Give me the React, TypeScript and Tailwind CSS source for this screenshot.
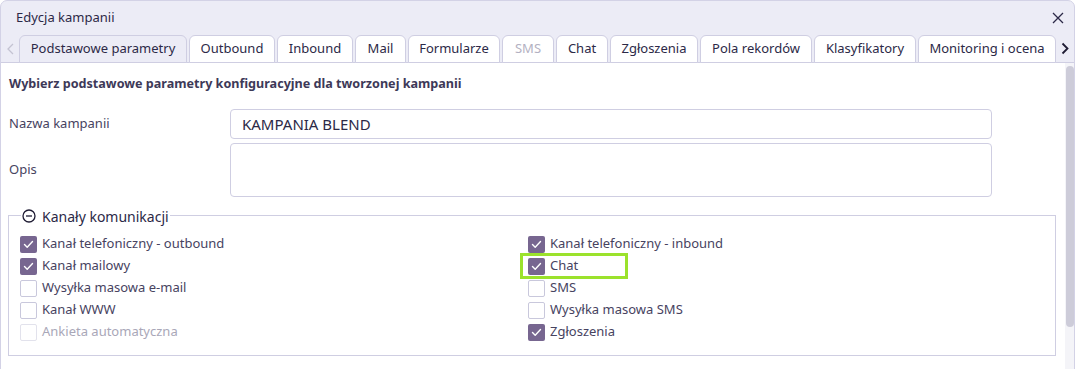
import React from "react";

const tabs: { label: string; w: number; active?: boolean; disabled?: boolean }[] = [
  { label: "Podstawowe parametry", w: 168, active: true },
  { label: "Outbound", w: 86 },
  { label: "Inbound", w: 76 },
  { label: "Mail", w: 51 },
  { label: "Formularze", w: 92 },
  { label: "SMS", w: 52, disabled: true },
  { label: "Chat", w: 52 },
  { label: "Zgłoszenia", w: 88 },
  { label: "Pola rekordów", w: 112 },
  { label: "Klasyfikatory", w: 102 },
  { label: "Monitoring i ocena", w: 138 },
];

const left = [
  { label: "Kanał telefoniczny - outbound", checked: true },
  { label: "Kanał mailowy", checked: true },
  { label: "Wysyłka masowa e-mail" },
  { label: "Kanał WWW" },
  { label: "Ankieta automatyczna", disabled: true },
];
const right = [
  { label: "Kanał telefoniczny - inbound", checked: true },
  { label: "Chat", checked: true, highlight: true },
  { label: "SMS" },
  { label: "Wysyłka masowa SMS" },
  { label: "Zgłoszenia", checked: true },
];

function Check({ label, checked, disabled, highlight }: { label: string; checked?: boolean; disabled?: boolean; highlight?: boolean }) {
  return (
    <div className="relative flex items-center h-[22px] gap-[5px]">
      <div
        className={
          checked
            ? "w-[17px] h-[17px] rounded-[2px] bg-[#776690] flex items-center justify-center"
            : disabled
            ? "w-[17px] h-[17px] rounded-[2px] border border-[#e2e2ec] bg-white"
            : "w-[17px] h-[17px] rounded-[2px] border border-[#c9c8dc] bg-white"
        }
      >
        {checked && (
          <svg width="11" height="9" viewBox="0 0 11 9" fill="none">
            <path d="M1.5 4.6 L4.2 7.2 L9.5 1.6" stroke="white" strokeWidth="1.4" strokeLinecap="round" strokeLinejoin="round" />
          </svg>
        )}
      </div>
      <span className={disabled ? "text-[13px] text-[#a9a7b8]" : "text-[13px] text-[#47435f]"}>{label}</span>
      {highlight && (
        <div className="absolute left-[-8px] top-[-2px] w-[108px] h-[26px] border-[3px] border-[#9be22c]" />
      )}
    </div>
  );
}

export default function App() {
  return (
    <div className="w-[1076px] h-[369px] overflow-hidden bg-white font-['Noto_Sans',sans-serif]">
      <div className="w-[1075px] h-[380px] border border-[#d3d2e6] rounded-t-[7px] bg-[#ececf6] flex flex-col">
        <div className="h-[34px] flex items-center justify-between pl-[15px] pr-[10px] shrink-0">
          <span className="text-[13px] text-[#2c2947]">Edycja kampanii</span>
          <svg width="12" height="12" viewBox="0 0 12 12">
            <path d="M1 1 L11 11 M11 1 L1 11" stroke="#2c2947" strokeWidth="1.3" />
          </svg>
        </div>
        <div className="h-[28px] flex items-end shrink-0 border-b border-[#cfcee2]">
          <div className="w-[18px] shrink-0 h-full flex items-center justify-center">
            <svg width="7" height="12" viewBox="0 0 7 12">
              <path d="M6 1 L1 6 L6 11" stroke="#c4c3d2" strokeWidth="1.3" fill="none" />
            </svg>
          </div>
          <div className="flex gap-[2px] h-full shrink-0">
            {tabs.map((t) => (
              <div
                key={t.label}
                style={{ width: t.w }}
                className={
                  (t.active ? "bg-[#ececf6] " : "bg-white ") +
                  "shrink-0 h-[28px] -mb-px border border-[#cfcee2] rounded-t-[6px] flex items-center justify-center text-[13px] " +
                  (t.disabled ? "text-[#b3b1c2]" : "text-[#2c2947]")
                }
              >
                {t.label}
              </div>
            ))}
          </div>
          <div className="flex-1 h-full flex items-center justify-center">
            <svg width="8" height="13" viewBox="0 0 8 13">
              <path d="M1.5 1.5 L6.5 6.5 L1.5 11.5" stroke="#1e1b33" strokeWidth="1.8" fill="none" />
            </svg>
          </div>
        </div>
        <div className="flex-1 flex bg-white">
          <div className="flex-1 flex flex-col pl-[7px] pr-[9px]">
            <div className="h-[42px] flex items-center pl-px pt-[1px] text-[12.6px] font-bold text-[#3d3958]">
              Wybierz podstawowe parametry konfiguracyjne dla tworzonej kampanii
            </div>
            <div className="flex items-center h-[30px] mt-[4px]">
              <span className="w-[222px] pl-px text-[13px] text-[#47435f]">Nazwa kampanii</span>
              <div className="w-[762px] h-[30px] border border-[#cfcee2] rounded-[4px] flex items-center px-[11px] text-[15px] text-[#2c2947]">
                KAMPANIA BLEND
              </div>
            </div>
            <div className="flex items-center h-[54px] mt-[4px]">
              <span className="w-[222px] pl-px text-[13px] text-[#47435f]">Opis</span>
              <div className="w-[762px] h-[54px] border border-[#cfcee2] rounded-[4px]" />
            </div>
            <div className="relative mt-[18px] w-[1048px] h-[141px] border border-[#cfcee2]">
              <div className="absolute left-[12px] top-[-10px] bg-white flex items-center gap-[6px] pl-px pr-[1px] h-[20px]">
                <svg width="14" height="14" viewBox="0 0 14 14">
                  <circle cx="7" cy="7" r="6" stroke="#1e1b33" strokeWidth="1.3" fill="none" />
                  <path d="M4 7 H10" stroke="#1e1b33" strokeWidth="1.3" />
                </svg>
                <span className="text-[14px] text-[#2c2947]">Kanały komunikacji</span>
              </div>
              <div className="flex pt-[17px] pl-[11px]">
                <div className="w-[508px] flex flex-col">
                  {left.map((c) => (
                    <Check key={c.label} {...c} />
                  ))}
                </div>
                <div className="flex flex-col">
                  {right.map((c) => (
                    <Check key={c.label} {...c} />
                  ))}
                </div>
              </div>
            </div>
            <div className="relative mt-[11px] ml-[12px] flex items-center gap-[6px] h-[20px]">
              <svg width="14" height="14" viewBox="0 0 14 14">
                <circle cx="7" cy="7" r="6" stroke="#1e1b33" strokeWidth="1.3" fill="none" />
                <path d="M4 7 H10" stroke="#1e1b33" strokeWidth="1.3" />
              </svg>
              <span className="text-[14px] text-[#2c2947]">Zaawansowane ustawienia kampanii</span>
            </div>
          </div>
          <div className="w-[10px] bg-[#f4f4f8] flex justify-center pt-[3px]">
            <div className="w-[8px] h-[261px] rounded-[4px] bg-[#cdccd9]" />
          </div>
        </div>
      </div>
    </div>
  );
}
